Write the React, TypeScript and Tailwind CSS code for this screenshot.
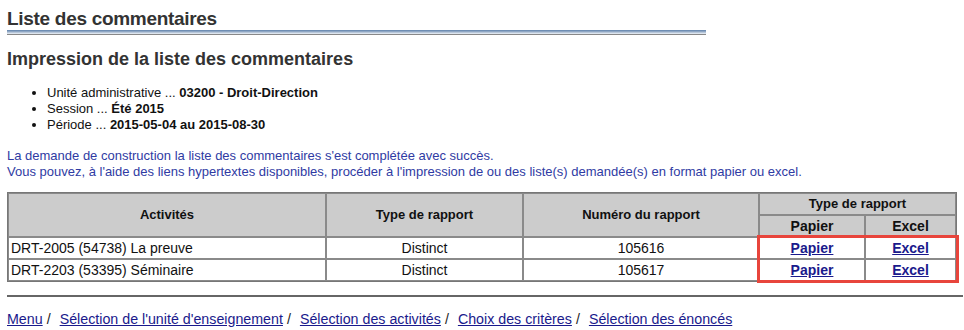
const rows = [
  { act: "DRT-2005 (54738) La preuve", type: "Distinct", num: "105616" },
  { act: "DRT-2203 (53395) Séminaire", type: "Distinct", num: "105617" },
];

const crumbs = [
  "Menu",
  "Sélection de l'unité d'enseignement",
  "Sélection des activités",
  "Choix des critères",
  "Sélection des énoncés",
];

export default function App() {
  const cell = "border border-[#8a8a8a] h-[22px] px-[2px] leading-[16px]";
  return (
    <div className="w-[964px] h-[330px] bg-white pl-[7px] pr-[1px] text-[13px] text-[#111] font-['Liberation_Sans',Arial,sans-serif] overflow-hidden">
      {/* Titre */}
      <div className="w-[699px] pt-[8px]">
        <h1 className="text-[19px] leading-[22px] font-bold text-[#333] tracking-[-0.3px]">Liste des commentaires</h1>
        <div className="h-[1px] bg-[#6e8db3]" />
        <div className="h-[1px] bg-[#8fa7c4]" />
        <div className="h-[1px] bg-[#b8c7da]" />
        <div className="h-[1px] bg-[#dde5ee]" />
        <div className="h-[1px] bg-[#888]" />
      </div>

      <h2 className="mt-[13px] text-[18px] leading-[22px] font-bold text-[#333]">Impression de la liste des commentaires</h2>

      <ul className="mt-[15px] ml-[40px] list-disc leading-[16px] text-[#111]">
        <li>Unité administrative ... <b>03200 - Droit-Direction</b></li>
        <li>Session ... <b>Été 2015</b></li>
        <li>Période ... <b>2015-05-04 au 2015-08-30</b></li>
      </ul>

      <p className="mt-[15px] text-[13px] leading-[16px] text-[#2f3ba3]">
        La demande de construction la liste des commentaires s'est complétée avec succès.
        <br />
        Vous pouvez, à l'aide des liens hypertextes disponibles, procéder à l'impression de ou des liste(s) demandée(s) en format papier ou excel.
      </p>

      <div className="relative mt-[12px] w-[950px]">
        <table className="w-full border-separate border-spacing-0 border border-[#777] text-[14px]">
          <thead className="bg-[#cccccc] font-bold text-[13px]">
            <tr>
              <th rowSpan={2} className={cell + " w-[318px]"}>Activités</th>
              <th rowSpan={2} className={cell + " w-[197px]"}>Type de rapport</th>
              <th rowSpan={2} className={cell + " w-[236px]"}>Numéro du rapport</th>
              <th colSpan={2} className={cell}>Type de rapport</th>
            </tr>
            <tr>
              <th className={cell + " w-[106px] text-[14px]"}>Papier</th>
              <th className={cell + " text-[14px]"}>Excel</th>
            </tr>
          </thead>
          <tbody>
            {rows.map(r => (
              <tr key={r.num}>
                <td className={cell + " text-left"}>{r.act}</td>
                <td className={cell + " text-center"}>{r.type}</td>
                <td className={cell + " text-center"}>{r.num}</td>
                <td className={cell + " text-center"}><a href="#" className="font-bold underline text-[#1a1a8c]">Papier</a></td>
                <td className={cell + " text-center"}><a href="#" className="font-bold underline text-[#1a1a8c]">Excel</a></td>
              </tr>
            ))}
          </tbody>
        </table>
        <div className="absolute left-[750px] top-[43px] w-[202px] h-[48px] border-[3px] border-[#e8453c]" />
      </div>

      <div className="mt-[13px] h-[2px] bg-[#666] w-[956px]" />

      <div className="mt-[14px] flex items-center text-[14.25px] leading-[16px]">
        {crumbs.map((c, i) => (
          <span key={c} className="flex items-center">
            <a href="#" className="underline text-[#1a1a8c]">{c}</a>
            {i < crumbs.length - 1 && <span className="ml-[4px] mr-[9px] text-[#222]">/</span>}
          </span>
        ))}
      </div>
    </div>
  );
}
